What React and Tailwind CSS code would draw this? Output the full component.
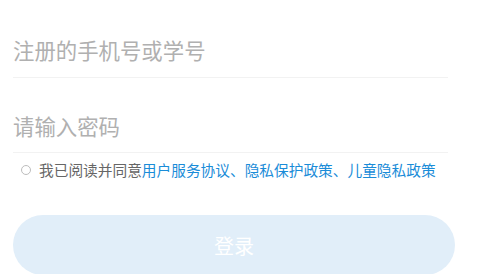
import React, { useState } from 'react';

const font = { fontFamily: '"Noto Sans CJK SC", "Noto Sans", sans-serif' };

export default function App() {
  const [agreed, setAgreed] = useState(false);

  return (
    <div className="w-[480px] h-[274px] bg-white overflow-hidden" style={font}>
      <div className="px-[13px]">
        {/* Phone / ID */}
        <div className="w-[435px] pt-[39px] pb-[16px] border-b border-[#f2f2f2]">
          <div className="text-[21.4px] leading-[22px] text-[#b0b0b0]">注册的手机号或学号</div>
        </div>

        {/* Password */}
        <div className="w-[435px] pt-[37px] pb-[15px] border-b border-[#f2f2f2]">
          <div className="text-[21.4px] leading-[22px] text-[#b0b0b0]">请输入密码</div>
        </div>

        {/* Agreement */}
        <div className="mt-[8px] flex items-center h-[18px]">
          <button
            onClick={() => setAgreed(!agreed)}
            className={`ml-[8px] w-[10px] h-[10px] rounded-full border ${agreed ? 'border-[#1a8cd8] bg-[#1a8cd8]' : 'border-[#bdbdbd]'}`}
          />
          <p className="ml-[8px] text-[14.7px] leading-[18px] text-[#666666] whitespace-nowrap">
            我已阅读并同意<span className="text-[#1a8cd8]">用户服务协议、隐私保护政策、儿童隐私政策</span>
          </p>
        </div>

        {/* Login */}
        <button className="mt-[36px] w-[442px] h-[60px] rounded-full bg-[#e1eef9] flex items-center justify-center">
          <span className="text-[20px] leading-[20px] text-white mt-[2px]">登录</span>
        </button>
      </div>
    </div>
  );
}
